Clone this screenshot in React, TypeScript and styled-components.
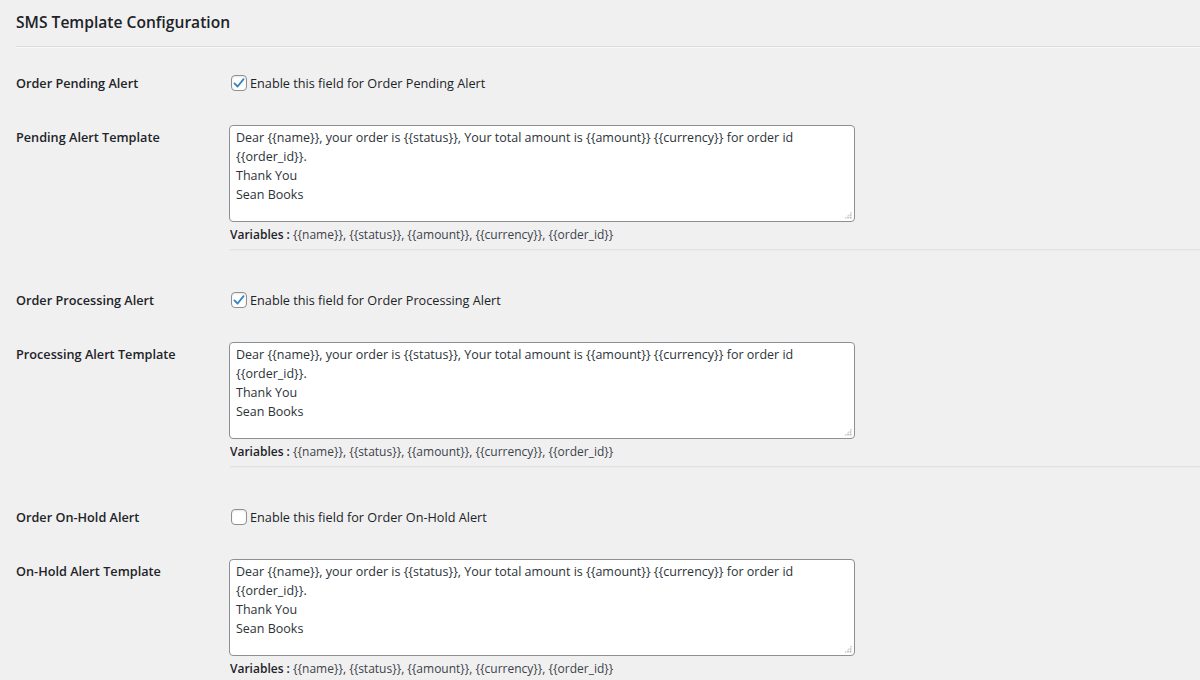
import styled, { createGlobalStyle } from 'styled-components';

const GlobalStyle = createGlobalStyle`
  html, body {
    margin: 0;
    padding: 0;
    background: #f0f0f1;
  }
  body {
    font-family: "Open Sans", "Noto Sans", Arial, sans-serif;
    font-size: 12.7px;
    color: #1d2327;
  }
`;

const Wrap = styled.div`
  padding: 0 0 0 16px;
  overflow: hidden;
  height: 680px;
`;

const Title = styled.h2`
  margin: 0;
  padding-top: 12px;
  font-size: 15.6px;
  line-height: 20px;
  font-weight: 600;
  color: #1d2327;
`;

const Divider = styled.hr<{ $faint?: boolean }>`
  margin: 0;
  border: 0;
  border-top: 1px solid ${(p) => (p.$faint ? '#e2e2e4' : '#dcdcde')};
  border-bottom: 1px solid ${(p) => (p.$faint ? '#ebebec' : '#f6f7f7')};
`;

const HeaderDivider = styled(Divider)`
  margin-top: 14px;
`;

const Block = styled.div`
  display: grid;
  grid-template-columns: 214px 1fr;
  padding-top: 18px;

  & + & {
    padding-top: 32px;
  }
`;

const Label = styled.div<{ $top?: boolean }>`
  font-weight: 600;
  line-height: 20px;
  align-self: ${(p) => (p.$top ? 'start' : 'center')};
  margin-top: ${(p) => (p.$top ? '26px' : '0')};
  padding-top: ${(p) => (p.$top ? '1px' : '0')};
`;

const CheckRow = styled.label`
  display: flex;
  align-items: center;
  height: 34px;
  gap: 3px;
  line-height: 20px;
  cursor: pointer;
`;

const Box = styled.span<{ $on: boolean }>`
  width: 16px;
  height: 16px;
  box-sizing: border-box;
  border: 1px solid #8c8f94;
  border-radius: 4px;
  background: #fff;
  display: flex;
  align-items: center;
  justify-content: center;
  margin-left: 1px;
  box-shadow: inset 0 1px 2px rgba(0, 0, 0, 0.1);
`;

const Field = styled.div`
  margin-top: 25px;
`;

const TemplateBox = styled.div`
  position: relative;
  width: 626px;
  margin-left: -1px;
`;

const Template = styled.textarea`
  display: block;
  box-sizing: border-box;
  width: 626px;
  height: 97px;
  margin: 0;
  padding: 2px 6px;
  border: 1px solid #8c8f94;
  border-radius: 4px;
  background: #fff;
  color: #2c3338;
  font-family: inherit;
  font-size: 12.5px;
  line-height: 19px;
  resize: none;
  outline: none;
`;

const Grip = styled.span`
  position: absolute;
  right: 3px;
  bottom: 3px;
  width: 8px;
  height: 8px;
  pointer-events: none;
  background-image: radial-gradient(circle, #a7aaad 0.8px, transparent 1px);
  background-size: 2.7px 2.7px;
  clip-path: polygon(100% 0, 100% 100%, 0 100%);
`;

const Vars = styled.p`
  margin: 5px 0 6px;
  font-size: 12px;
  line-height: 16px;
  color: #3c434a;

  b {
    font-weight: 600;
    color: #1d2327;
  }
`;

function Checkbox({ on }: { on: boolean }) {
  return (
    <Box $on={on}>
      {on && (
        <svg width="14" height="14" viewBox="0 0 20 20">
          <path
            d="M3.5 10.5 L8 15 L16.5 4.5"
            fill="none"
            stroke="#3582c4"
            strokeWidth="2.6"
            strokeLinecap="round"
            strokeLinejoin="round"
          />
        </svg>
      )}
    </Box>
  );
}

const message =
  'Dear {{name}}, your order is {{status}}, Your total amount is {{amount}} {{currency}} for order id\n{{order_id}}.\nThank You\nSean Books';

const alerts = [
  { title: 'Order Pending Alert', template: 'Pending Alert Template', on: true },
  { title: 'Order Processing Alert', template: 'Processing Alert Template', on: true },
  { title: 'Order On-Hold Alert', template: 'On-Hold Alert Template', on: false },
];

export default function App() {
  return (
    <>
      <GlobalStyle />
      <Wrap>
        <Title>SMS Template Configuration</Title>
        <HeaderDivider />
        {alerts.map((a) => (
          <Block key={a.title}>
            <Label>{a.title}</Label>
            <CheckRow>
              <Checkbox on={a.on} />
              Enable this field for {a.title}
            </CheckRow>
            <Label $top>{a.template}</Label>
            <Field>
              <TemplateBox>
                <Template defaultValue={message} spellCheck={false} />
                <Grip />
              </TemplateBox>
              <Vars>
                <b>Variables :</b> {'{{name}}, {{status}}, {{amount}}, {{currency}}, {{order_id}}'}
              </Vars>
              <Divider $faint />
            </Field>
          </Block>
        ))}
      </Wrap>
    </>
  );
}
